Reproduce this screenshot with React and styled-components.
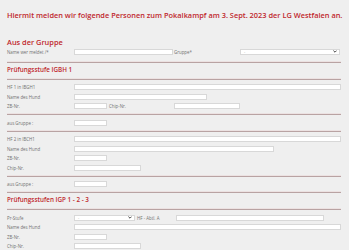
import React from 'react'
import styled, { createGlobalStyle } from 'styled-components'

const GlobalStyle = createGlobalStyle`
    html, body {
        margin: 0;
        padding: 0;
        background: #efefef;
    }
    body {
        font-family: "Open Sans", "Liberation Sans", sans-serif;
    }
`

const Page = styled.div`
    width: 349px;
    height: 250px;
    overflow: hidden;
    padding: 9px 5px 0 7px;
    box-sizing: border-box;
`

const Title = styled.h1`
    margin: 0;
    font-size: 7.4px;
    line-height: 12px;
    font-weight: 600;
    color: #c0272d;
    white-space: nowrap;
`

const GroupTitle = styled.h2`
    margin: 16px 0 0;
    font-size: 7.4px;
    line-height: 10px;
    font-weight: 600;
    color: #c0272d;
`

const Heading = styled.h3`
    margin: 0;
    height: 13px;
    display: flex;
    align-items: center;
    font-size: 6.3px;
    font-weight: 600;
    color: #c0272d;
`

const Divider = styled.div`
    width: 334px;
    height: 1px;
    background: #b9a3a3;
    box-shadow: 0 -1px 0 #ece2e2;
    margin: ${p => p.$m || '3px 0'};
`

const Row = styled.div`
    height: 9.5px;
    display: flex;
    align-items: center;
`

const Label = styled.span`
    width: ${p => p.$w || 67}px;
    flex-shrink: 0;
    font-size: 4.4px;
    color: #707070;
    white-space: nowrap;
    padding-left: ${p => p.$pl || 0}px;
    box-sizing: border-box;
`

const Input = styled.div`
    width: ${p => p.$w}px;
    height: 6px;
    flex-shrink: 0;
    background: #fff;
    border: 1px solid #d8d8d8;
    box-sizing: border-box;
`

const Select = styled.div`
    width: ${p => p.$w}px;
    height: 6px;
    flex-shrink: 0;
    background: #fff;
    border: 1px solid #d8d8d8;
    box-sizing: border-box;
    display: flex;
    align-items: center;
    justify-content: space-between;
    padding: 0 2px 0 3px;
    font-size: 4px;
    color: #888;
    line-height: 1;
`

const Chevron = () => (
    <svg width="4" height="3" viewBox="0 0 4 3">
        <path d="M0.4 0.6 L2 2.2 L3.6 0.6" fill="none" stroke="#333" strokeWidth="0.9" />
    </svg>
)

const Dropdown = ({ w }) => (
    <Select $w={w}>
        <span>-</span>
        <Chevron />
    </Select>
)

const App = () => {
    return (
        <Page>
            <GlobalStyle />
            <Title>Hiermit melden wir folgende Personen zum Pokalkampf am 3. Sept. 2023 der LG Westfalen an.</Title>

            <GroupTitle>Aus der Gruppe</GroupTitle>
            <Row>
                <Label>Name wer meldet /*</Label>
                <Input $w={99} />
                <Label $pl={1}>Gruppe*</Label>
                <Dropdown w={100} />
            </Row>
            <Divider $m="5px 0 0" />

            <Heading>Prüfungsstufe IGBH 1</Heading>
            <Divider />
            <Row>
                <Label>HF 1 in IBGH1</Label>
                <Input $w={267} />
            </Row>
            <Row>
                <Label>Name des Hund</Label>
                <Input $w={133} />
            </Row>
            <Row>
                <Label>ZB-Nr.</Label>
                <Input $w={33} />
                <Label $pl={2}>Chip-Nr.</Label>
                <Input $w={66} />
            </Row>
            <Divider />
            <Row>
                <Label>aus Gruppe :</Label>
                <Input $w={33} />
            </Row>
            <Divider />
            <Row>
                <Label>HF 2 in IBCH1</Label>
                <Input $w={267} />
            </Row>
            <Row>
                <Label>Name des Hund</Label>
                <Input $w={200} />
            </Row>
            <Row>
                <Label>ZB-Nr.</Label>
                <Input $w={33} />
            </Row>
            <Row>
                <Label>Chip-Nr.</Label>
                <Input $w={67} />
            </Row>
            <Divider />
            <Row>
                <Label>aus Gruppe :</Label>
                <Input $w={33} />
            </Row>
            <Divider $m="3px 0 0" />

            <Heading>Prüfungsstufen IGP 1 - 2 - 3</Heading>
            <Divider />
            <Row>
                <Label>Pr-Stufe</Label>
                <Dropdown w={61} />
                <Label $w={41} $pl={2}>HF - Abtl. A</Label>
                <Input $w={148} />
            </Row>
            <Row>
                <Label>Name des Hund</Label>
                <Input $w={267} />
            </Row>
            <Row>
                <Label>ZB-Nr.</Label>
                <Input $w={33} />
            </Row>
            <Row>
                <Label>Chip-Nr.</Label>
                <Input $w={67} />
            </Row>
        </Page>
    )
}

export default App
